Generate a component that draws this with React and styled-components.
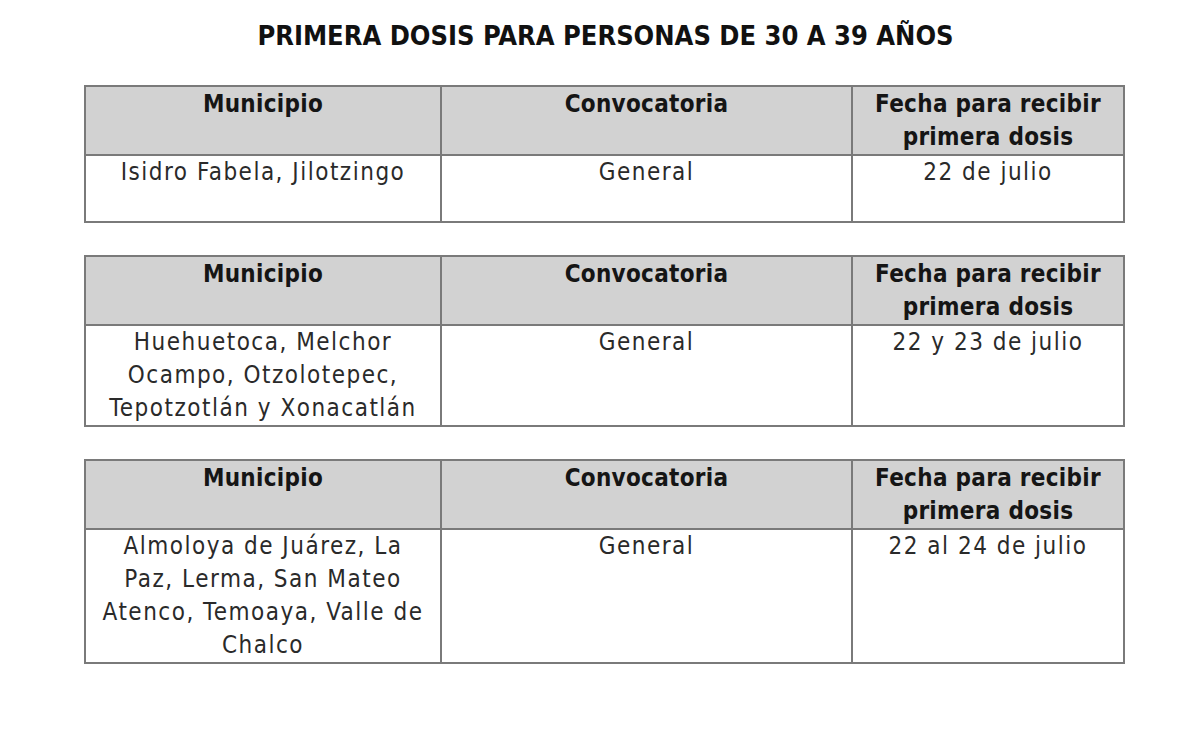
import React from "react";
import styled, { createGlobalStyle } from "styled-components";

const Global = createGlobalStyle`
  html, body { margin: 0; padding: 0; background: #ffffff; }
  body { font-family: "DejaVu Sans Condensed", "DejaVu Sans", "Liberation Sans", sans-serif; font-stretch: condensed; color: #1a1a1a; }
`;

const Page = styled.div`
  width: 1200px;
  height: 741px;
  box-sizing: border-box;
  padding: 18px 77px 0 84px;
  display: flex;
  flex-direction: column;
  gap: 32px;
`;

const Title = styled.h1`
  margin: 0 0 -1px 0;
  text-align: center;
  font-size: 27px;
  font-weight: bold;
  letter-spacing: 0;
  line-height: 36px;
  color: #111;
  padding-left: 4px;
`;

const Table = styled.table`
  width: 1039px;
  border-collapse: collapse;
  table-layout: fixed;
  border: 2px solid #7a7a7a;
`;

const HeadCell = styled.th`
  background: #d2d2d2;
  border: 2px solid #7a7a7a;
  height: 64px;
  padding: 1px 4px 0;
  box-sizing: border-box;
  vertical-align: top;
  font-size: 24px;
  font-weight: bold;
  line-height: 33px;
  letter-spacing: 0.3px;
  color: #151515;
`;

const Cell = styled.td`
  border: 2px solid #7a7a7a;
  padding: 0 14px;
  height: ${(p) => p.$lines * 33 - 1}px;
  vertical-align: top;
  text-align: center;
  font-size: 24px;
  line-height: 33px;
  letter-spacing: 1.5px;
  color: #2a2a2a;
`;

const data = [
  { mun: "Isidro Fabela, Jilotzingo", fecha: "22 de julio", lines: 2 },
  { mun: "Huehuetoca, Melchor Ocampo, Otzolotepec, Tepotzotlán y Xonacatlán", fecha: "22 y 23 de julio", lines: 3 },
  { mun: "Almoloya de Juárez, La Paz, Lerma, San Mateo Atenco, Temoaya, Valle de Chalco", fecha: "22 al 24 de julio", lines: 4 },
];

export default function App() {
  return (
    <>
      <Global />
      <Page>
        <Title>PRIMERA DOSIS PARA PERSONAS DE 30 A 39 AÑOS</Title>
        {data.map((d, i) => (
          <Table key={i}>
            <colgroup>
              <col style={{ width: "356px" }} />
              <col style={{ width: "411px" }} />
              <col style={{ width: "272px" }} />
            </colgroup>
            <thead>
              <tr>
                <HeadCell>Municipio</HeadCell>
                <HeadCell>Convocatoria</HeadCell>
                <HeadCell>Fecha para recibir primera dosis</HeadCell>
              </tr>
            </thead>
            <tbody>
              <tr>
                <Cell $lines={d.lines}>{d.mun}</Cell>
                <Cell $lines={d.lines}>General</Cell>
                <Cell $lines={d.lines}>{d.fecha}</Cell>
              </tr>
            </tbody>
          </Table>
        ))}
      </Page>
    </>
  );
}
